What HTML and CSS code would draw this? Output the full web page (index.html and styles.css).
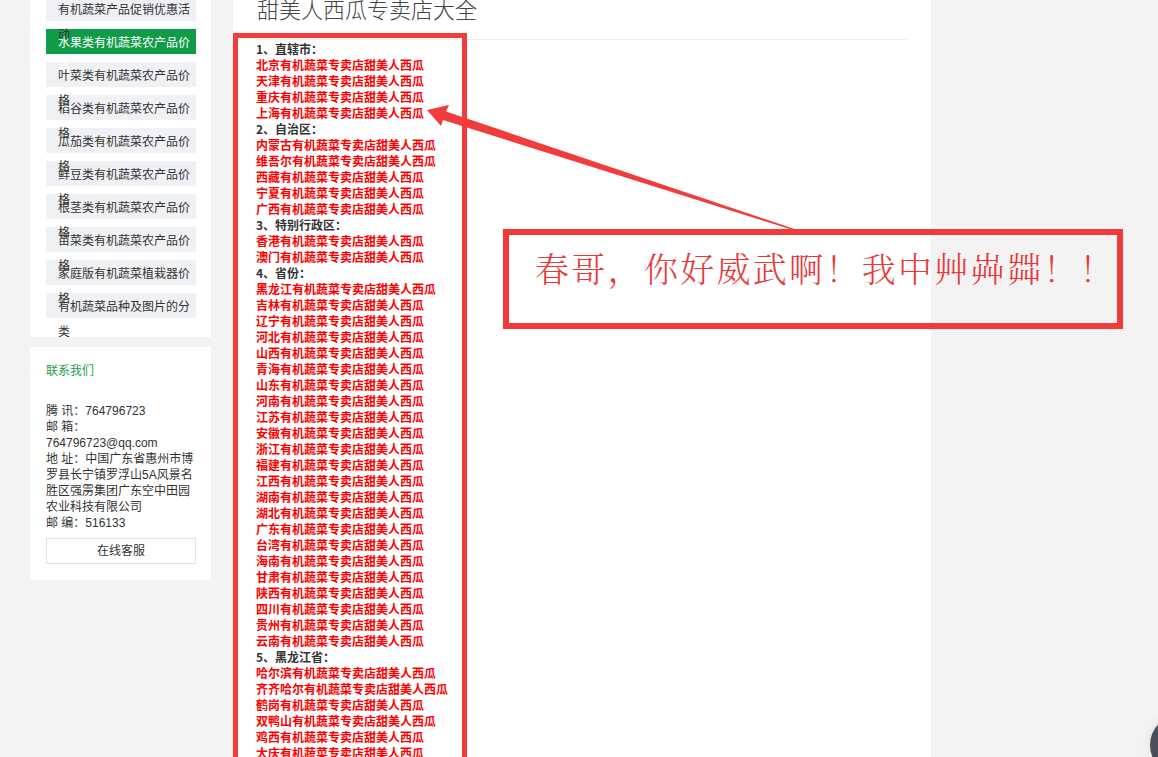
FILE: index.html
```html
<!DOCTYPE html>
<html lang="zh-CN">
<head>
<meta charset="utf-8">
<title>甜美人西瓜专卖店大全</title>
<link rel="stylesheet" href="styles.css">
</head>
<body>
<div class="page">
  <aside class="sidebar">
    <div class="card menu-card">
      <a class="menu-item">有机蔬菜产品促销优惠活动</a>
      <a class="menu-item active">水果类有机蔬菜农产品价格</a>
      <a class="menu-item">叶菜类有机蔬菜农产品价格</a>
      <a class="menu-item">稻谷类有机蔬菜农产品价格</a>
      <a class="menu-item">瓜茄类有机蔬菜农产品价格</a>
      <a class="menu-item">鲜豆类有机蔬菜农产品价格</a>
      <a class="menu-item">根茎类有机蔬菜农产品价格</a>
      <a class="menu-item">苗菜类有机蔬菜农产品价格</a>
      <a class="menu-item">家庭版有机蔬菜植栽器价格</a>
      <a class="menu-item">有机蔬菜品种及图片的分类</a>
    </div>
    <div class="card contact-card">
      <h3 class="contact-title">联系我们</h3>
      <p class="contact-text">腾 讯：764796723<br>邮 箱：<br>764796723@qq.com<br>地 址：中国广东省惠州市博<br>罗县长宁镇罗浮山5A风景名<br>胜区强雳集团广东空中田园<br>农业科技有限公司<br>邮 编：516133</p>
      <a class="service-btn">在线客服</a>
    </div>
  </aside>

  <main class="main">
    <h1 class="title">甜美人西瓜专卖店大全</h1>
    <div class="list">
      <div class="group">1、直辖市：</div>
      <a>北京有机蔬菜专卖店甜美人西瓜</a>
      <a>天津有机蔬菜专卖店甜美人西瓜</a>
      <a>重庆有机蔬菜专卖店甜美人西瓜</a>
      <a>上海有机蔬菜专卖店甜美人西瓜</a>
      <div class="group">2、自治区：</div>
      <a>内蒙古有机蔬菜专卖店甜美人西瓜</a>
      <a>维吾尔有机蔬菜专卖店甜美人西瓜</a>
      <a>西藏有机蔬菜专卖店甜美人西瓜</a>
      <a>宁夏有机蔬菜专卖店甜美人西瓜</a>
      <a>广西有机蔬菜专卖店甜美人西瓜</a>
      <div class="group">3、特别行政区：</div>
      <a>香港有机蔬菜专卖店甜美人西瓜</a>
      <a>澳门有机蔬菜专卖店甜美人西瓜</a>
      <div class="group">4、省份：</div>
      <a>黑龙江有机蔬菜专卖店甜美人西瓜</a>
      <a>吉林有机蔬菜专卖店甜美人西瓜</a>
      <a>辽宁有机蔬菜专卖店甜美人西瓜</a>
      <a>河北有机蔬菜专卖店甜美人西瓜</a>
      <a>山西有机蔬菜专卖店甜美人西瓜</a>
      <a>青海有机蔬菜专卖店甜美人西瓜</a>
      <a>山东有机蔬菜专卖店甜美人西瓜</a>
      <a>河南有机蔬菜专卖店甜美人西瓜</a>
      <a>江苏有机蔬菜专卖店甜美人西瓜</a>
      <a>安徽有机蔬菜专卖店甜美人西瓜</a>
      <a>浙江有机蔬菜专卖店甜美人西瓜</a>
      <a>福建有机蔬菜专卖店甜美人西瓜</a>
      <a>江西有机蔬菜专卖店甜美人西瓜</a>
      <a>湖南有机蔬菜专卖店甜美人西瓜</a>
      <a>湖北有机蔬菜专卖店甜美人西瓜</a>
      <a>广东有机蔬菜专卖店甜美人西瓜</a>
      <a>台湾有机蔬菜专卖店甜美人西瓜</a>
      <a>海南有机蔬菜专卖店甜美人西瓜</a>
      <a>甘肃有机蔬菜专卖店甜美人西瓜</a>
      <a>陕西有机蔬菜专卖店甜美人西瓜</a>
      <a>四川有机蔬菜专卖店甜美人西瓜</a>
      <a>贵州有机蔬菜专卖店甜美人西瓜</a>
      <a>云南有机蔬菜专卖店甜美人西瓜</a>
      <div class="group">5、黑龙江省：</div>
      <a>哈尔滨有机蔬菜专卖店甜美人西瓜</a>
      <a>齐齐哈尔有机蔬菜专卖店甜美人西瓜</a>
      <a>鹤岗有机蔬菜专卖店甜美人西瓜</a>
      <a>双鸭山有机蔬菜专卖店甜美人西瓜</a>
      <a>鸡西有机蔬菜专卖店甜美人西瓜</a>
      <a>大庆有机蔬菜专卖店甜美人西瓜</a>
      <a>伊春有机蔬菜专卖店甜美人西瓜</a>
      <a>牡丹江有机蔬菜专卖店甜美人西瓜</a>
    </div>
  </main>
</div>

<svg class="arrow" width="1158" height="757" viewBox="0 0 1158 757" aria-hidden="true">
  <polygon points="427,110 449,105 446,111.5 796,229.5 794.5,230.5 443,120 441,126" fill="#f23b3b"/>
</svg>

<div class="callout">春哥，你好威武啊！我中艸芔茻！！</div>

<div class="float-btn"></div>
</body>
</html>
```

FILE: styles.css
```css
html, body {
  margin: 0;
  padding: 0;
}

body {
  background: #f3f3f3;
  font-family: "Liberation Sans", "Noto Sans CJK SC", sans-serif;
  font-size: 12px;
  color: #333;
  height: 757px;
  overflow: hidden;
  position: relative;
}

a {
  color: inherit;
  text-decoration: none;
}

.page {
  display: flex;
  align-items: flex-start;
  padding-left: 30px;
}

/* ---------- sidebar ---------- */
.sidebar {
  width: 181px;
  flex: none;
}

.card {
  background: #fff;
}

.menu-card {
  margin-top: -16px;
  padding: 12px 15px 11px 16px;
}

.menu-item {
  display: block;
  height: 25px;
  line-height: 25px;
  margin-bottom: 8px;
  padding-left: 12px;
  background: #f0f1f5;
  color: #333;
  font-size: 12px;
  font-family: "Noto Sans CJK SC", sans-serif;
  word-break: break-all;
}

.menu-item.active {
  background: #0f9b47;
  color: #fff;
}

.contact-card {
  margin-top: 10px;
  padding: 16px 15px 16px 16px;
}

.contact-title {
  margin: 0 0 24px;
  font-size: 12px;
  font-weight: normal;
  line-height: 16px;
  color: #1c9a4a;
}

.contact-text {
  margin: 0;
  line-height: 16px;
  font-size: 12px;
  color: #333;
  white-space: nowrap;
}

.service-btn {
  display: block;
  margin-top: 7px;
  height: 24px;
  line-height: 24px;
  border: 1px solid #e2e2e2;
  text-align: center;
  font-size: 12px;
  color: #333;
}

/* ---------- main ---------- */
.main {
  margin-left: 22px;
  width: 698px;
  min-height: 820px;
  background: #fff;
  padding: 0 24px;
  box-sizing: border-box;
}

.title {
  margin: -7px 0 0;
  width: 650px;
  padding-bottom: 16px;
  border-bottom: 1px solid #eeeeee;
  font-family: "Noto Sans CJK SC", sans-serif;
  font-size: 22px;
  font-weight: 300;
  line-height: 30px;
  color: #444;
}

.list {
  position: relative;
  display: flex;
  flex-direction: column;
  line-height: 16px;
  font-size: 12px;
  font-weight: bold;
  font-family: "Noto Sans CJK SC", sans-serif;
  padding-top: 1px;
  margin-left: -1px;
}

.list::before {
  content: "";
  position: absolute;
  left: -23px;
  top: -7px;
  width: 224px;
  height: 900px;
  border: 5px solid #f43c3c;
}

.list a {
  color: #f00;
}

.list .group {
  color: #333;
}

/* ---------- annotations ---------- */
.arrow {
  position: absolute;
  left: 0;
  top: 0;
  pointer-events: none;
}

.callout {
  position: absolute;
  left: 503px;
  top: 229px;
  width: 582px;
  height: 88px;
  border: 6px solid #f23a3a;
  padding-left: 26px;
  box-sizing: content-box;
  font-family: "Noto Serif CJK SC", "AR PL UMing CN", "Noto Sans CJK SC", serif;
  font-weight: 300;
  font-size: 34px;
  line-height: 66px;
  color: #e8393b;
  letter-spacing: 2.3px;
  white-space: nowrap;
}

.float-btn {
  position: fixed;
  right: -52px;
  bottom: -18px;
  width: 60px;
  height: 60px;
  border-radius: 50%;
  background: #4a4e58;
  box-shadow: 0 0 8px rgba(0, 0, 0, 0.1);
}
```
